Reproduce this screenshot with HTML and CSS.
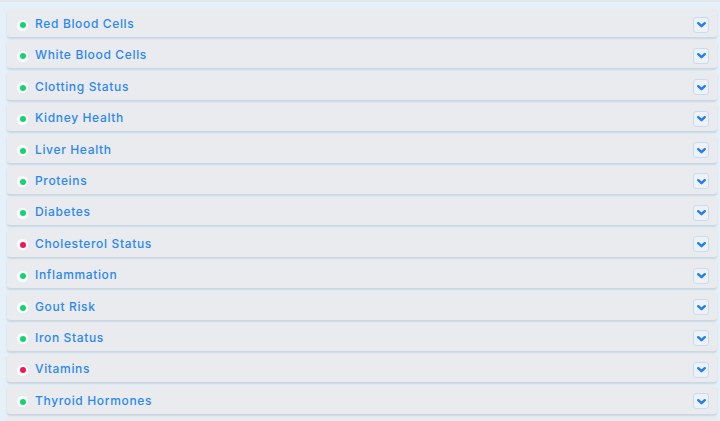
FILE: index.html
```
<!DOCTYPE html>
<html lang="en">

<head>
    <meta charset="UTF-8">
    <meta name="viewport" content="width=device-width, initial-scale=1.0">
    <title>Blood Test Results</title>
    <link rel="stylesheet" href="styles.css">
</head>

<body>
    <div class="top-strip"></div>
    <div class="panel-list">
        <div class="panel"><span class="status status--ok"></span><span class="panel__title">Red Blood Cells</span><button class="toggle"><svg viewBox="0 0 10 10"><path d="M2.5 4 L5 6.3 L7.5 4"/></svg></button></div>
        <div class="panel"><span class="status status--ok"></span><span class="panel__title">White Blood Cells</span><button class="toggle"><svg viewBox="0 0 10 10"><path d="M2.5 4 L5 6.3 L7.5 4"/></svg></button></div>
        <div class="panel"><span class="status status--ok"></span><span class="panel__title">Clotting Status</span><button class="toggle"><svg viewBox="0 0 10 10"><path d="M2.5 4 L5 6.3 L7.5 4"/></svg></button></div>
        <div class="panel"><span class="status status--ok"></span><span class="panel__title">Kidney Health</span><button class="toggle"><svg viewBox="0 0 10 10"><path d="M2.5 4 L5 6.3 L7.5 4"/></svg></button></div>
        <div class="panel"><span class="status status--ok"></span><span class="panel__title">Liver Health</span><button class="toggle"><svg viewBox="0 0 10 10"><path d="M2.5 4 L5 6.3 L7.5 4"/></svg></button></div>
        <div class="panel"><span class="status status--ok"></span><span class="panel__title">Proteins</span><button class="toggle"><svg viewBox="0 0 10 10"><path d="M2.5 4 L5 6.3 L7.5 4"/></svg></button></div>
        <div class="panel"><span class="status status--ok"></span><span class="panel__title">Diabetes</span><button class="toggle"><svg viewBox="0 0 10 10"><path d="M2.5 4 L5 6.3 L7.5 4"/></svg></button></div>
        <div class="panel"><span class="status status--bad"></span><span class="panel__title">Cholesterol Status</span><button class="toggle"><svg viewBox="0 0 10 10"><path d="M2.5 4 L5 6.3 L7.5 4"/></svg></button></div>
        <div class="panel"><span class="status status--ok"></span><span class="panel__title">Inflammation</span><button class="toggle"><svg viewBox="0 0 10 10"><path d="M2.5 4 L5 6.3 L7.5 4"/></svg></button></div>
        <div class="panel"><span class="status status--ok"></span><span class="panel__title">Gout Risk</span><button class="toggle"><svg viewBox="0 0 10 10"><path d="M2.5 4 L5 6.3 L7.5 4"/></svg></button></div>
        <div class="panel"><span class="status status--ok"></span><span class="panel__title">Iron Status</span><button class="toggle"><svg viewBox="0 0 10 10"><path d="M2.5 4 L5 6.3 L7.5 4"/></svg></button></div>
        <div class="panel"><span class="status status--bad"></span><span class="panel__title">Vitamins</span><button class="toggle"><svg viewBox="0 0 10 10"><path d="M2.5 4 L5 6.3 L7.5 4"/></svg></button></div>
        <div class="panel"><span class="status status--ok"></span><span class="panel__title">Thyroid Hormones</span><button class="toggle"><svg viewBox="0 0 10 10"><path d="M2.5 4 L5 6.3 L7.5 4"/></svg></button></div>
        <div class="panel"></div>
    </div>
</body>

</html>
```

FILE: styles.css
```
:root {
    --color-bg: #e6f0f8;
    --color-panel: #e9ebee;
    --color-text: #2b88f0;
    --color-ok: #12d572;
    --color-bad: #f0185a;
}

body {
    margin: 0;
    background-color: var(--color-bg);
    font-family: 'Inter', sans-serif;
    overflow: hidden;
}

.top-strip {
    height: 2px;
    background-color: #e3e7eb;
}

.panel-list {
    display: flex;
    flex-direction: column;
    gap: 3.4px;
    padding: 7px 3px 0 7px;
}

.panel {
    display: flex;
    align-items: center;
    height: 28px;
    padding: 0 8px 0 10px;
    background-color: var(--color-panel);
    border-radius: 3px;
    box-shadow: 0 2px 2px rgba(120, 135, 150, 0.25);
    flex-shrink: 0;
}

.status {
    width: 11px;
    height: 11px;
    border-radius: 50%;
    background-color: #fff;
    display: flex;
    align-items: center;
    justify-content: center;
    margin-top: 4px;
    margin-right: 7px;
}

.status:before {
    content: '';
    width: 6px;
    height: 6px;
    border-radius: 50%;
}

.status--ok:before {
    background-color: var(--color-ok);
}

.status--bad:before {
    background-color: var(--color-bad);
}

.panel__title {
    flex: 1;
    margin-top: 1px;
    color: var(--color-text);
    font-size: 12px;
    font-weight: 500;
    letter-spacing: 0.65px;
}

.toggle {
    width: 16px;
    height: 16px;
    padding: 0;
    margin-top: 3px;
    border: 1px solid #c6dcf3;
    border-radius: 3px;
    background-color: #eef1f5;
    display: flex;
    align-items: center;
    justify-content: center;
    cursor: pointer;
}

.toggle svg {
    width: 13px;
    height: 13px;
    fill: none;
    stroke: #1f7ff0;
    stroke-width: 1.9;
    stroke-linecap: round;
    stroke-linejoin: round;
}
```
